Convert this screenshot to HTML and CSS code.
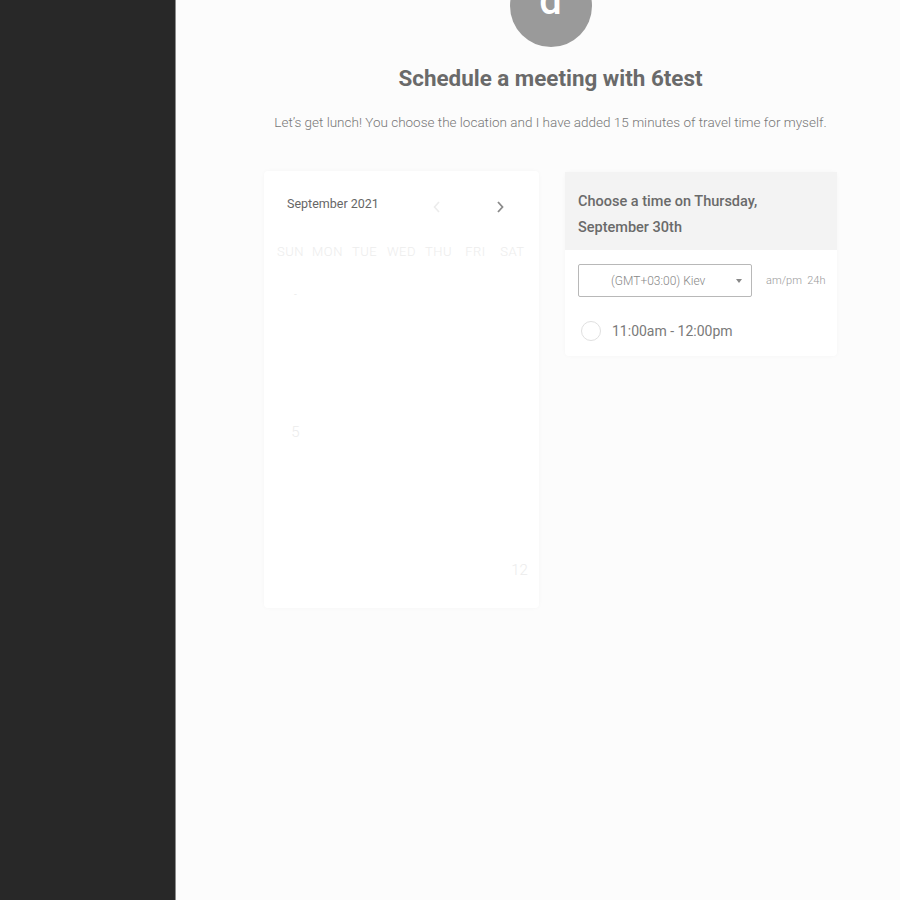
FILE: index.html
```html
<!DOCTYPE html>
<html>
<head>
<meta charset="utf-8">
<link rel="stylesheet" href="styles.css">
</head>
<body>
<div class="app">
  <aside class="sidebar"></aside>
  <main class="main">
    <div class="avatar"><span>d</span></div>
    <h1 class="title">Schedule a meeting with 6test</h1>
    <p class="subtitle">Let’s get lunch! You choose the location and I have added 15 minutes of travel time for myself.</p>
    <div class="panels">
      <section class="calendar">
        <div class="cal-head">
          <span class="month">September 2021</span>
          <span class="arrows">
            <span class="arrow prev">
              <svg width="10" height="14" viewBox="0 0 10 14"><path d="M7 2 L2.5 7 L7 12" fill="none" stroke="#ececec" stroke-width="1.6"/></svg>
            </span>
            <span class="arrow next">
              <svg width="10" height="14" viewBox="0 0 10 14"><path d="M3 2 L7.5 7 L3 12" fill="none" stroke="#8a8a8a" stroke-width="1.8"/></svg>
            </span>
          </span>
        </div>
        <div class="weekdays">
          <span>SUN</span><span>MON</span><span>TUE</span><span>WED</span><span>THU</span><span>FRI</span><span>SAT</span>
        </div>
        <div class="days">
          <span class="dash">-</span><span></span><span></span><span></span><span></span><span></span><span></span>
          <span></span><span></span><span></span><span></span><span></span><span></span><span></span>
          <span></span><span></span><span></span><span></span><span></span><span></span><span></span>
          <span class="faint">5</span><span></span><span></span><span></span><span></span><span></span><span></span>
          <span></span><span></span><span></span><span></span><span></span><span></span><span></span>
          <span></span><span></span><span></span><span></span><span></span><span></span><span></span>
          <span></span><span></span><span></span><span></span><span></span><span></span><span class="faint">12</span>
        </div>
      </section>
      <section class="times">
        <div class="times-head">Choose a time on Thursday, September 30th</div>
        <div class="times-body">
          <div class="tz-row">
            <div class="select">
              <span class="select-text">(GMT+03:00) Kiev</span>
              <span class="caret"></span>
            </div>
            <span class="format">am/pm&nbsp; 24h</span>
          </div>
          <div class="slot">
            <span class="radio"></span>
            <span class="slot-text">11:00am - 12:00pm</span>
          </div>
        </div>
      </section>
    </div>
  </main>
</div>
</body>
</html>
```
FILE: styles.css
```css
* { box-sizing: border-box; }
html, body { margin: 0; padding: 0; height: 100%; }
body {
  font-family: Roboto, "Liberation Sans", sans-serif;
  background: #fcfcfc;
  overflow: hidden;
}
.app {
  display: flex;
  height: 900px;
}
.sidebar {
  width: 176px;
  flex: none;
  background: #282828;
  border-right: 1px solid #8c8c8c;
}
.main {
  flex: 1;
  display: flex;
  flex-direction: column;
  align-items: center;
  padding-left: 25px;
  background: #fcfcfc;
}
.avatar {
  width: 82px;
  height: 82px;
  margin-top: -35px;
  border-radius: 50%;
  background: #9a9a9a;
  display: flex;
  justify-content: center;
  align-items: center;
  color: #fff;
  font-size: 40px;
  font-weight: 500;
}
.avatar span { margin-top: -12px; }
.title {
  margin: 18px 0 0;
  font-size: 22.4px;
  font-weight: 700;
  color: #6a6a6a;
  line-height: 26px;
}
.subtitle {
  margin: 23px 0 0;
  font-size: 13.5px;
  font-weight: 300;
  color: #777;
  line-height: 16px;
}
.panels {
  display: flex;
  gap: 26px;
  margin-top: 41px;
  align-items: flex-start;
}
.calendar {
  width: 275px;
  height: 437px;
  background: #fff;
  border-radius: 4px;
  box-shadow: 0 0 4px rgba(0,0,0,0.03);
  padding: 22px 8px 0;
}
.cal-head {
  display: flex;
  justify-content: space-between;
  align-items: center;
  padding: 0 26px 0 15px;
  height: 20px;
}
.month {
  font-size: 12.5px;
  color: #666;
}
.arrows {
  display: flex;
  gap: 53px;
  margin-top: 8px;
}
.arrow { display: flex; }
.weekdays {
  display: grid;
  grid-template-columns: repeat(7, 1fr);
  margin-top: 31px;
  text-align: center;
  font-size: 13px;
  font-weight: 300;
  color: #ededed;
  letter-spacing: 0.5px;
}
.days {
  display: grid;
  grid-template-columns: repeat(7, 1fr);
  grid-auto-rows: 46px;
  margin-top: 12px;
  text-align: center;
  font-size: 15px;
  font-weight: 300;
  color: #fafafa;
}
.days span { display: flex; align-items: center; justify-content: center; }
.days .faint { color: #ececec; }
.days span:first-child, .days span:nth-child(22) { padding-left: 10px; }
.days span:last-child { padding-left: 14px; }
.days .dash { color: #e4e4e4; font-size: 10px; }
.times {
  width: 272px;
  background: #fff;
  border-radius: 4px;
  box-shadow: 0 0 4px rgba(0,0,0,0.03);
  margin-top: 1px;
}
.times-head {
  background: #f3f3f3;
  padding: 17px 40px 10px 13px;
  font-size: 14.5px;
  font-weight: 500;
  color: #6a6a6a;
  line-height: 26px;
  height: 78px;
}
.times-body {
  padding: 13px 13px 0;
  height: 105px;
  margin-top: 1px;
}
.tz-row {
  display: flex;
  align-items: center;
  gap: 14px;
}
.select {
  flex: none;
  width: 174px;
  height: 33px;
  border: 1px solid #b8b8b8;
  border-radius: 2px;
  display: flex;
  align-items: center;
  position: relative;
  padding-left: 32px;
}
.select-text {
  font-size: 12px;
  font-weight: 300;
  color: #888;
}
.caret {
  position: absolute;
  right: 9px;
  top: 14px;
  width: 0;
  height: 0;
  border-left: 3px solid transparent;
  border-right: 3px solid transparent;
  border-top: 4px solid #888;
}
.format {
  white-space: nowrap;
  font-size: 11px;
  font-weight: 300;
  color: #9a9a9a;
}
.slot {
  display: flex;
  align-items: center;
  margin-top: 24px;
  gap: 11px;
  padding-left: 3px;
}
.radio {
  width: 20px;
  height: 20px;
  border-radius: 50%;
  border: 1px solid #e0e0e0;
  background: #fff;
}
.slot-text {
  font-size: 14px;
  font-weight: 400;
  color: #7a7a7a;
}
```
